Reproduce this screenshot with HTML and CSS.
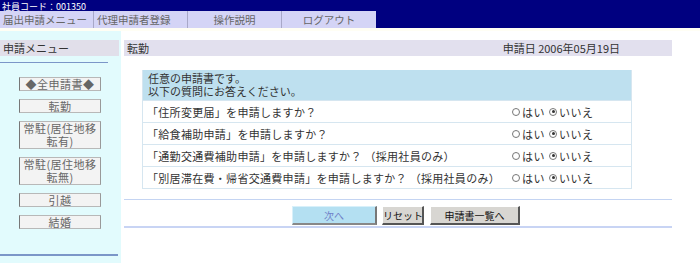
FILE: index.html
```html
<!DOCTYPE html>
<html lang="ja">
<head>
    <meta charset="UTF-8">
    <title>転勤 - 届出申請</title>
    <link rel="stylesheet" href="styles.css">
</head>
<body>
    <div class="topbar">
        <div class="emp-code">社員コード：001350</div>
        <div class="nav">
            <div class="nav-tab left">届出申請メニュー</div>
            <div class="nav-tab left">代理申請者登録</div>
            <div class="nav-tab">操作説明</div>
            <div class="nav-tab">ログアウト</div>
        </div>
    </div>

    <div class="layout">
        <div class="side">
            <div class="side-title">申請メニュー</div>
            <div class="side-line"></div>
            <div class="side-menu">
                <div class="side-btn">◆全申請書◆</div>
                <div class="side-btn">転勤</div>
                <div class="side-btn tall"><span>常駐(居住地移</span><span>転有)</span></div>
                <div class="side-btn tall"><span>常駐(居住地移</span><span>転無)</span></div>
                <div class="side-btn">引越</div>
                <div class="side-btn">結婚</div>
            </div>
            <div class="side-foot"></div>
        </div>

        <div class="main">
            <div class="title-bar">
                <span>転勤</span>
                <span class="date">申請日 2006年05月19日</span>
            </div>

            <div class="q-table">
                <div class="q-head"><span>任意の申請書です。</span><span>以下の質問にお答えください。</span></div>
                <div class="q-row">
                    <span>「住所変更届」を申請しますか？</span>
                    <span class="choice"><i class="radio"></i>はい <i class="radio on"></i>いいえ</span>
                </div>
                <div class="q-row">
                    <span>「給食補助申請」を申請しますか？</span>
                    <span class="choice"><i class="radio"></i>はい <i class="radio on"></i>いいえ</span>
                </div>
                <div class="q-row">
                    <span>「通勤交通費補助申請」を申請しますか？ （採用社員のみ）</span>
                    <span class="choice"><i class="radio"></i>はい <i class="radio on"></i>いいえ</span>
                </div>
                <div class="q-row">
                    <span>「別居滞在費・帰省交通費申請」を申請しますか？ （採用社員のみ）</span>
                    <span class="choice"><i class="radio"></i>はい <i class="radio on"></i>いいえ</span>
                </div>
            </div>

            <div class="actions">
                <button class="btn next">次へ</button>
                <button class="btn">リセット</button>
                <button class="btn wide">申請書一覧へ</button>
            </div>
        </div>
    </div>
</body>
</html>
```

FILE: styles.css
```css
* {
    margin: 0;
    padding: 0;
    box-sizing: border-box;
}

body {
    font-family: "Noto Sans CJK JP", "Liberation Sans", sans-serif;
    font-size: 11px;
    color: #333;
    background: #fff;
    width: 700px;
    height: 263px;
    overflow: hidden;
}

.topbar {
    background: #000080;
    height: 28px;
}

.emp-code {
    color: #fff;
    font-size: 9px;
    line-height: 13px;
    height: 11px;
    padding-left: 2px;
}

.nav {
    display: flex;
    height: 17px;
}

.nav-tab {
    width: 94px;
    background: #d4d4f6;
    border-right: 1px solid #a8a8c8;
    color: #666;
    font-size: 10.5px;
    line-height: 17px;
    text-align: center;
    white-space: nowrap;
}

.nav-tab.left {
    text-align: left;
    padding-left: 3px;
}

.nav-tab:last-child {
    border-right: none;
}

.layout {
    display: flex;
    height: 235px;
    background: #fffef4;
}

.side {
    width: 121px;
    margin-top: 3px;
    padding-top: 9px;
    background: #e2fbfd;
}

.side-title {
    width: 119px;
    height: 16px;
    background: #e1dfea;
    line-height: 16px;
    padding-left: 3px;
    font-size: 11px;
}

.side-line {
    width: 108px;
    height: 1px;
    margin-top: 6px;
    background: #7b96c8;
}

.side-menu {
    display: flex;
    flex-direction: column;
    gap: 8px;
    padding: 14px 0 0 19px;
}

.side-btn {
    width: 82px;
    height: 14px;
    background: #f3f3f3;
    border: 1px solid #b8b8b8;
    border-left-color: #777;
    border-right-color: #999;
    color: #666;
    font-size: 11px;
    line-height: 12px;
    text-align: center;
    letter-spacing: 0.5px;
    white-space: nowrap;
}

.side-btn.tall {
    height: 28px;
    display: flex;
    flex-direction: column;
    justify-content: center;
    line-height: 13px;
}

.side-foot {
    width: 118px;
    height: 2px;
    margin-top: 25px;
    background: #7b96c8;
}

.main {
    flex: 1;
    background: #fff;
    margin-top: 3px;
    padding: 9px 0 0 3px;
}

.title-bar {
    width: 548px;
    height: 16px;
    background: #e2e0ee;
    display: flex;
    justify-content: space-between;
    line-height: 16px;
    padding: 0 52px 0 3px;
}

.q-table {
    width: 490px;
    margin: 14px 0 0 18px;
    border: 1px solid #d6e6f0;
    border-top: none;
}

.q-head {
    background: #bee0ef;
    height: 30px;
    display: flex;
    flex-direction: column;
    justify-content: center;
    line-height: 13px;
    padding: 0 5px;
}

.q-row {
    display: flex;
    justify-content: space-between;
    align-items: center;
    height: 22px;
    padding: 0 27px 0 4px;
    border-top: 1px solid #d6e6f0;
    letter-spacing: 0.3px;
}

.choice {
    display: flex;
    align-items: center;
    width: 92px;
    letter-spacing: 0.5px;
}

.radio {
    display: inline-block;
    width: 8px;
    height: 8px;
    border: 1px solid #777;
    border-radius: 50%;
    margin-right: 2px;
    margin-left: 4px;
    position: relative;
}

.radio:first-child {
    margin-left: 0;
}

.radio.on::after {
    content: "";
    position: absolute;
    left: 1.5px;
    top: 1.5px;
    width: 3px;
    height: 3px;
    border-radius: 50%;
    background: #333;
}

.actions {
    width: 548px;
    margin-top: 10px;
    border-top: 1px solid #c4d4f2;
    border-bottom: 2px solid #c8d4f4;
    display: flex;
    gap: 5px;
    padding: 6px 0 1px 168px;
}

.btn {
    height: 19px;
    width: 42px;
    padding: 0;
    white-space: nowrap;
    font-family: inherit;
    font-size: 10px;
    color: #111;
    background: #d8d6d2;
    border: 1px solid #fff;
    border-right: 2px solid #555;
    border-bottom: 2px solid #555;
}

.btn.next {
    width: 85px;
    background: #b4e0f2;
    color: #7080c8;
    border-color: #d8f0fa #777 #888 #d8f0fa;
}

.btn.wide {
    width: 90px;
    margin-left: 1px;
}
```
